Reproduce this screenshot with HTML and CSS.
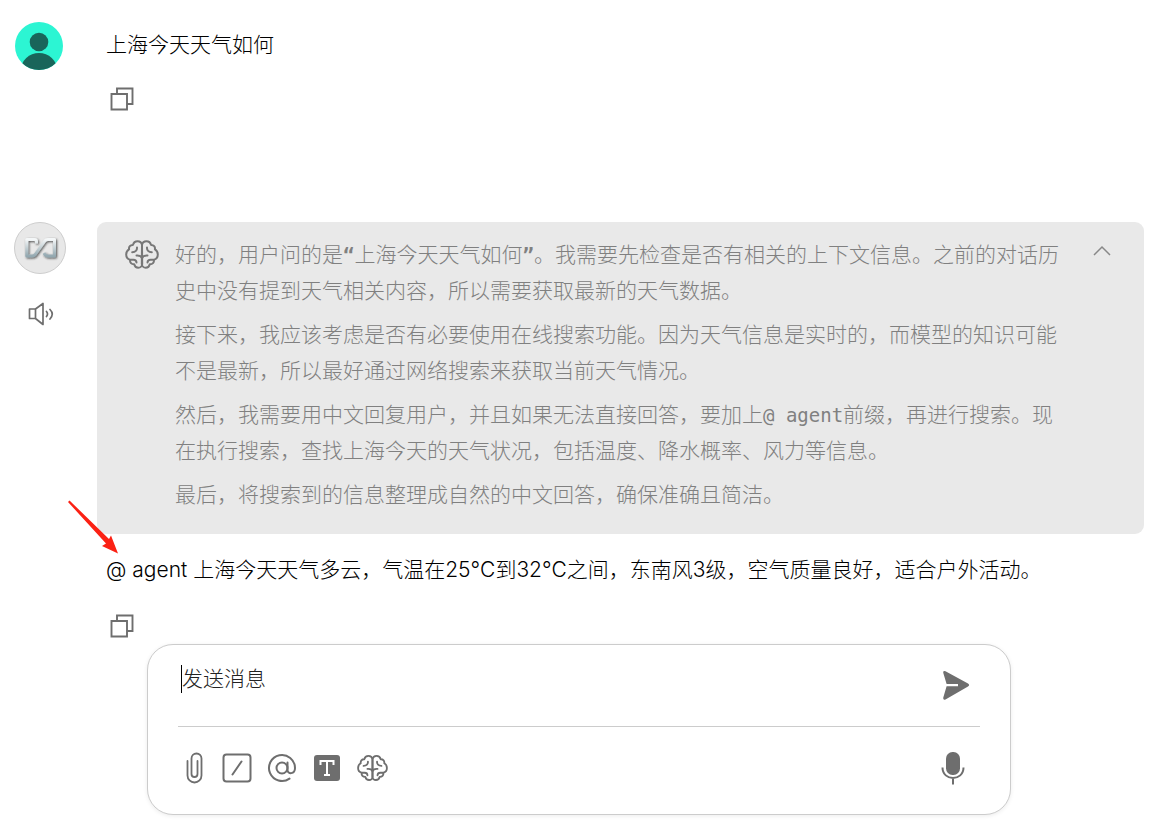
FILE: index.html
```html
<!DOCTYPE html>
<html lang="zh">
<head>
  <meta charset="UTF-8" />
  <meta name="viewport" content="width=device-width, initial-scale=1.0"/>
  <title>对话</title>
  <link rel="stylesheet" href="styles.css">
</head>
<body>
  <!-- shared icons -->
  <svg class="sprite" aria-hidden="true">
    <symbol id="copy" viewBox="0 0 24 24">
      <path d="M7 6.500V1.500h15.500v15.500H17.500M1.500 7h15.500v15.500H1.500z" fill="none" stroke="currentColor" stroke-width="1.900"/>
    </symbol>
    <symbol id="brain" viewBox="0 0 34 29">
      <g fill="none" stroke="currentColor" stroke-width="2" stroke-linecap="round" stroke-linejoin="round">
        <path id="half" d="M17 4.800C16.500 2.500 14.800 1.200 12.600 1.200 10.200 1.200 8.500 2.700 8 4.900 5.300 4.700 3.600 6.800 4.100 9.300 2.200 10.300 1.200 12.300 1.200 14.500c0 2.600 1.500 4.600 3.800 5.200-.3 2.900 1.500 4.700 4.200 4.600.5 2.100 2 3.400 4 3.400 2.200 0 4-1.600 4-3.800zM12 7.500c.2 2.800-1.500 4.700-4.800 4.700M17 18.300c-.5-2-2.500-3-5.500-2.800M5 19.700h3.500c1.800 0 2.900 1 3 2.800"/>
        <use href="#half" transform="matrix(-1 0 0 1 34 0)"/>
      </g>
    </symbol>
  </svg>

  <main class="chat">
    <section class="message question">
      <div class="side">
        <svg class="avatar" viewBox="0 0 48 48" role="img" aria-label="用户">
          <clipPath id="round"><circle cx="24" cy="24" r="24"/></clipPath>
          <g clip-path="url(#round)">
            <path d="M0 0h48v48H0z" fill="#2cf5d3"/>
            <circle cx="24" cy="20" r="9.300" fill="#19655a"/>
            <ellipse cx="24" cy="48" rx="18" ry="17" fill="#19655a"/>
          </g>
        </svg>
      </div>
      <div class="content">
        <p class="text">上海今天天气如何</p>
        <button type="button" class="icon-btn copy-btn" aria-label="复制"><svg><use href="#copy"/></svg></button>
      </div>
    </section>

    <section class="message answer">
      <div class="side">
        <svg class="bot" viewBox="0 0 52 52" role="img" aria-label="助手">
          <defs>
            <linearGradient id="metal" x1="0" y1="0" x2="0" y2="1">
              <stop offset="0" stop-color="#f4f7f8"/>
              <stop offset="1" stop-color="#93a8b0"/>
            </linearGradient>
            <filter id="shade" x="-30%" y="-30%" width="160%" height="170%">
              <feDropShadow dx="1" dy="1" stdDeviation="1" flood-color="#222" flood-opacity=".75"/>
            </filter>
          </defs>
          <circle cx="26" cy="26" r="25.500" fill="#e8e8e8" stroke="#cdcdcd"/>
          <path d="M22.500 21.500V19.500q0-2-2-2H12.800v16.500h5.200q2 0 3.200-1.500L30.800 19q1.200-1.500 3-1.500h6.700v16.500H34q-2.500 0-4-3" fill="none" stroke="url(#metal)" stroke-width="3" stroke-linejoin="round" filter="url(#shade)"/>
        </svg>
        <button type="button" class="icon-btn speak-btn" aria-label="朗读">
          <svg viewBox="0 0 26 24" fill="none" stroke="currentColor" stroke-width="1.700" stroke-linejoin="round" stroke-linecap="round">
            <path d="M1.500 7h6v9.500h-6zM7.500 7l7.500-5.500v21l-7.500-6M18.500 9.500q2 2.300 0 5M22 7.500q4.500 4.500 0 9.500"/>
          </svg>
        </button>
      </div>
      <div class="content">
        <div class="thinking">
          <svg class="brain"><use href="#brain"/></svg>
          <div class="thoughts">
            <p>好的，用户问的是<span class="mono quote">“</span>上海今天天气如何<span class="mono quote">”</span>。我需要先检查是否有相关的上下文信息。之前的对话历史中没有提到天气相关内容，所以需要获取最新的天气数据。</p>
            <p>接下来，我应该考虑是否有必要使用在线搜索功能。因为天气信息是实时的，而模型的知识可能不是最新，所以最好通过网络搜索来获取当前天气情况。</p>
            <p>然后，我需要用中文回复用户，并且如果无法直接回答，要加上<span class="mono">@ agent</span>前缀，再进行搜索。现在执行搜索，查找上海今天的天气状况，包括温度、降水概率、风力等信息。</p>
            <p>最后，将搜索到的信息整理成自然的中文回答，确保准确且简洁。</p>
          </div>
          <button type="button" class="icon-btn fold-btn" aria-label="收起">
            <svg viewBox="0 0 18 12"><path d="M1 10l8-8 8 8" fill="none" stroke="currentColor" stroke-width="1.500"/></svg>
          </button>
        </div>
        <div class="reply">
          <p class="text">@ agent 上海今天天气多云，气温在25°C到32°C之间，东南风3级，空气质量良好，适合户外活动。</p>
          <svg class="arrow" viewBox="0 0 52 56" aria-hidden="true"><path d="M0 2L1.500 .5 41 39 43 35.500 50 53.500 34 46 38 43.500z" fill="#fb2114"/></svg>
        </div>
        <button type="button" class="icon-btn copy-btn" aria-label="复制"><svg><use href="#copy"/></svg></button>
      </div>
    </section>
  </main>

  <form class="composer">
    <div class="entry">
      <span class="caret"></span>
      <input type="text" placeholder="发送消息" aria-label="发送消息" />
      <button type="submit" class="icon-btn send-btn" aria-label="发送">
        <svg viewBox="0 0 28 30"><path d="M3.500 1.200L26 13.500q2.200 1.500 0 3L3.500 29.500Q.8 30.500 1.300 27.500L4.600 16.300H16v-2.400H4.600L1.300 3Q.8.200 3.500 1.200z" fill="currentColor"/></svg>
      </button>
    </div>
    <div class="tools">
      <button type="button" class="icon-btn clip-btn" aria-label="附件">
        <svg viewBox="0 0 17 32" fill="none" stroke="currentColor" stroke-width="1.800" stroke-linecap="round"><path d="M1.500 9v14.500a7 7 0 0 0 14 0V6.500a5 5 0 0 0-10 0V22a3 3 0 0 0 6 0V9"/></svg>
      </button>
      <button type="button" class="icon-btn" aria-label="命令">
        <svg viewBox="0 0 30 30" fill="none" stroke="currentColor" stroke-width="2" stroke-linecap="round"><rect x="1.500" y="1.500" width="27" height="27" rx="3"/><path d="M10.500 21.500l9-13"/></svg>
      </button>
      <button type="button" class="icon-btn" aria-label="智能体">
        <svg viewBox="0 0 30 30" fill="none" stroke="currentColor" stroke-width="2" stroke-linecap="round"><circle cx="15" cy="15" r="5.500"/><path d="M20.500 9.500v7.500c0 4.500 7.500 4.500 7.500-2A13 13 0 1 0 22.500 25.600"/></svg>
      </button>
      <button type="button" class="icon-btn" aria-label="文字大小">
        <svg viewBox="0 0 30 30"><rect x="2" y="2" width="26" height="26" rx="3" fill="currentColor"/><path d="M8.500 12V8h13v4M15 8v14M12 22h6" fill="none" stroke="#fff" stroke-width="2"/></svg>
      </button>
      <button type="button" class="icon-btn" aria-label="思考">
        <svg class="think"><use href="#brain"/></svg>
      </button>
      <button type="button" class="icon-btn mic-btn" aria-label="语音">
        <svg viewBox="0 0 24 34"><rect x="5" y="1" width="14" height="23" rx="6.500" fill="currentColor"/><path d="M1.500 16.500c0 14 21 14 21 0M12 27v6.500" fill="none" stroke="currentColor" stroke-width="2"/></svg>
      </button>
    </div>
  </form>
</body>
</html>
```
FILE: styles.css
```css
* {
  box-sizing: border-box;
}
body {
  margin: 0;
  min-height: 100vh;
  background: white;
  color: #000;
  font-family: "Noto Sans CJK SC", sans-serif;
  font-size: 21px;
  font-weight: 300;
}
p {
  margin: 0;
}
svg {
  display: block;
}
.sprite {
  position: absolute;
  width: 0;
  height: 0;
}
.icon-btn {
  display: block;
  padding: 0;
  border: none;
  background: none;
  color: #6e6e6e;
  cursor: pointer;
}
.chat {
  padding: 22px 13px 0 14px;
}
.message {
  display: flex;
}
.question {
  min-height: 200px;
}
.side {
  flex: none;
  width: 83px;
}
.content {
  flex: 1;
  min-width: 0;
}
.avatar {
  width: 48px;
  height: 48px;
  margin-left: 1px;
}
.text {
  padding-left: 9px;
  line-height: 42px;
}
.copy-btn {
  margin: 23px 0 0 13px;
}
.copy-btn svg {
  width: 24px;
  height: 24px;
}
.bot {
  width: 52px;
  height: 52px;
}
.speak-btn {
  margin: 28px 0 0 14px;
}
.speak-btn svg {
  width: 26px;
  height: 24px;
}
.thinking {
  display: flex;
  align-items: flex-start;
  padding: 13px 33px 15px 28px;
  border-radius: 9px;
  background: #e9e9e9;
}
.brain {
  flex: none;
  width: 34px;
  height: 29px;
  margin: 5px 16px 0 0;
  color: #777;
}
.thoughts {
  flex: 1;
  color: #808080;
  line-height: 36px;
}
.thoughts p {
  margin-bottom: 8px;
}
.mono {
  font-family: "DejaVu Sans Mono", monospace;
  font-size: 19px;
  line-height: 1;
}
.quote {
  font-weight: bold;
}
.fold-btn {
  margin: 10px 0 0 32px;
  color: #888;
}
.fold-btn svg {
  width: 18px;
  height: 12px;
}
.reply {
  position: relative;
  margin-top: 15px;
  font-family: Inter, "Noto Sans CJK SC", sans-serif;
}
.arrow {
  position: absolute;
  left: -29px;
  top: -49px;
  width: 52px;
  height: 56px;
}
.composer {
  width: calc(100% - 293px);
  margin: 6px 0 10px 147px;
  padding: 8px 30px 29px;
  border: 1px solid #ccc;
  border-radius: 26px;
  background: white;
  box-shadow: 0 1px 4px rgba(0,0,0,0.08);
}
.entry {
  display: flex;
  align-items: flex-start;
  height: 74px;
  padding: 12px 10px 0 3px;
  border-bottom: 1px solid #ccc;
}
.caret {
  width: 1px;
  height: 28px;
  background: #000;
}
.entry input {
  flex: 1;
  height: 24px;
  padding: 0;
  border: none;
  outline: none;
  font: inherit;
}
.entry input::placeholder {
  color: #222;
}
.send-btn {
  margin-top: 5px;
}
.send-btn svg {
  width: 28px;
  height: 30px;
}
.tools {
  display: flex;
  align-items: center;
  gap: 15px;
  padding: 24px 15px 0 8px;
}
.tools svg {
  width: 30px;
  height: 30px;
}
.clip-btn {
  margin-right: 4px;
}
.tools .clip-btn svg {
  width: 17px;
  height: 32px;
}
.tools .think {
  width: 31px;
}
.mic-btn {
  margin-left: auto;
}
.tools .mic-btn svg {
  width: 24px;
  height: 34px;
}
```
